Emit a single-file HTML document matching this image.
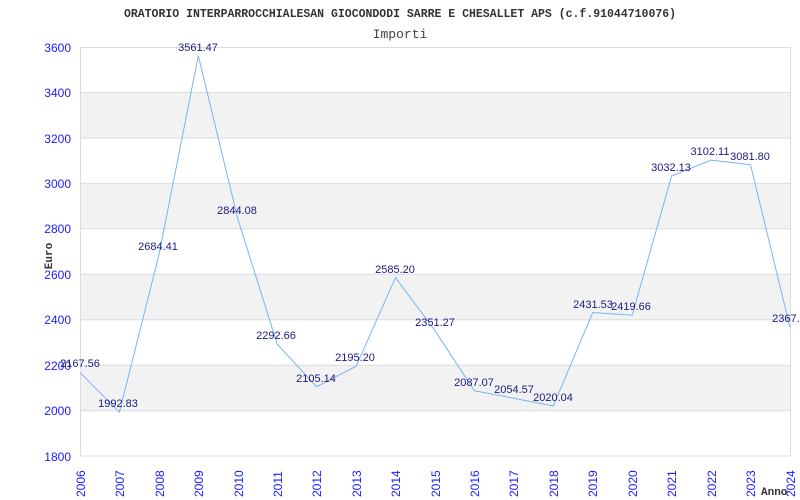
<!DOCTYPE html>
<html><head><meta charset="utf-8"><style>body{margin:0;background:#fff}svg{display:block}</style></head><body>
<svg width="800" height="500" xmlns="http://www.w3.org/2000/svg">
<rect width="800" height="500" fill="#fff"/>
<g fill="#f2f2f2">
<rect x="80" y="92.5" width="710" height="45.4"/>
<rect x="80" y="183.4" width="710" height="45.4"/>
<rect x="80" y="274.3" width="710" height="45.4"/>
<rect x="80" y="365.2" width="710" height="45.4"/>
</g>
<g stroke="#dcdcdc" stroke-width="1">
<line x1="80" y1="47.5" x2="790" y2="47.5"/><line x1="80" y1="92.5" x2="790" y2="92.5"/>
<line x1="80" y1="138" x2="790" y2="138"/><line x1="80" y1="183.4" x2="790" y2="183.4"/>
<line x1="80" y1="228.9" x2="790" y2="228.9"/><line x1="80" y1="274.3" x2="790" y2="274.3"/>
<line x1="80" y1="319.8" x2="790" y2="319.8"/><line x1="80" y1="365.2" x2="790" y2="365.2"/>
<line x1="80" y1="410.7" x2="790" y2="410.7"/><line x1="80" y1="456" x2="790" y2="456"/>
<line x1="80.5" y1="47" x2="80.5" y2="456"/><line x1="790.5" y1="47" x2="790.5" y2="456"/>
</g>
<text x="400" y="17" text-anchor="middle" font-family="Liberation Mono, monospace" font-weight="bold" font-size="11.5" fill="#333">ORATORIO INTERPARROCCHIALESAN GIOCONDODI SARRE E CHESALLET APS (c.f.91044710076)</text>
<text x="400" y="38" text-anchor="middle" font-family="Liberation Mono, monospace" font-size="13" fill="#444">Importi</text>
<g font-family="Liberation Sans, sans-serif" font-size="12" fill="#1a1aff" text-anchor="end">
<text x="71" y="52">3600</text><text x="71" y="97">3400</text><text x="71" y="143">3200</text><text x="71" y="188">3000</text><text x="71" y="233">2800</text><text x="71" y="279">2600</text><text x="71" y="324">2400</text><text x="71" y="370">2200</text><text x="71" y="415">2000</text><text x="71" y="461">1800</text>
</g>
<text transform="translate(52,256) rotate(-90)" text-anchor="middle" font-family="Liberation Mono, monospace" font-weight="bold" font-size="11" fill="#333">Euro</text>
<g font-family="Liberation Sans, sans-serif" font-size="12" fill="#1a1aff">
<text transform="translate(85,497) rotate(-90)">2006</text><text transform="translate(124,497) rotate(-90)">2007</text><text transform="translate(164,497) rotate(-90)">2008</text><text transform="translate(203,497) rotate(-90)">2009</text><text transform="translate(243,497) rotate(-90)">2010</text><text transform="translate(282,497) rotate(-90)">2011</text><text transform="translate(321,497) rotate(-90)">2012</text><text transform="translate(361,497) rotate(-90)">2013</text><text transform="translate(400,497) rotate(-90)">2014</text><text transform="translate(440,497) rotate(-90)">2015</text><text transform="translate(479,497) rotate(-90)">2016</text><text transform="translate(518,497) rotate(-90)">2017</text><text transform="translate(558,497) rotate(-90)">2018</text><text transform="translate(597,497) rotate(-90)">2019</text><text transform="translate(637,497) rotate(-90)">2020</text><text transform="translate(676,497) rotate(-90)">2021</text><text transform="translate(716,497) rotate(-90)">2022</text><text transform="translate(755,497) rotate(-90)">2023</text><text transform="translate(795,497) rotate(-90)">2024</text>
</g>
<text x="761" y="495" font-family="Liberation Mono, monospace" font-weight="bold" font-size="11" fill="#333">Anno</text>
<polyline fill="none" stroke="#7ab4f5" stroke-width="1" points="80,372.5 119.4,412.2 158.9,255 198.3,55.8 237.8,218.8 277.2,344.1 316.6,386.7 356.1,366.2 395.5,277.6 435,330.7 474.4,390.8 513.8,398.2 553.3,406 592.7,312.5 632.2,315.2 671.6,176 711,160.1 750.5,164.7 789.9,327"/>
<g font-family="Liberation Sans, sans-serif" font-size="11" fill="#1a1a80" text-anchor="middle">
<text x="80" y="367">2167.56</text><text x="118" y="407">1992.83</text><text x="158" y="250">2684.41</text><text x="198" y="51">3561.47</text><text x="237" y="214">2844.08</text><text x="276" y="339">2292.66</text><text x="316" y="382">2105.14</text><text x="355" y="361">2195.20</text><text x="395" y="273">2585.20</text><text x="435" y="326">2351.27</text><text x="474" y="386">2087.07</text><text x="514" y="393">2054.57</text><text x="553" y="401">2020.04</text><text x="593" y="308">2431.53</text><text x="631" y="310">2419.66</text><text x="671" y="171">3032.13</text><text x="710" y="155">3102.11</text><text x="750" y="160">3081.80</text><text x="789" y="322">2367.6</text>
</g>
</svg>
</body></html>
